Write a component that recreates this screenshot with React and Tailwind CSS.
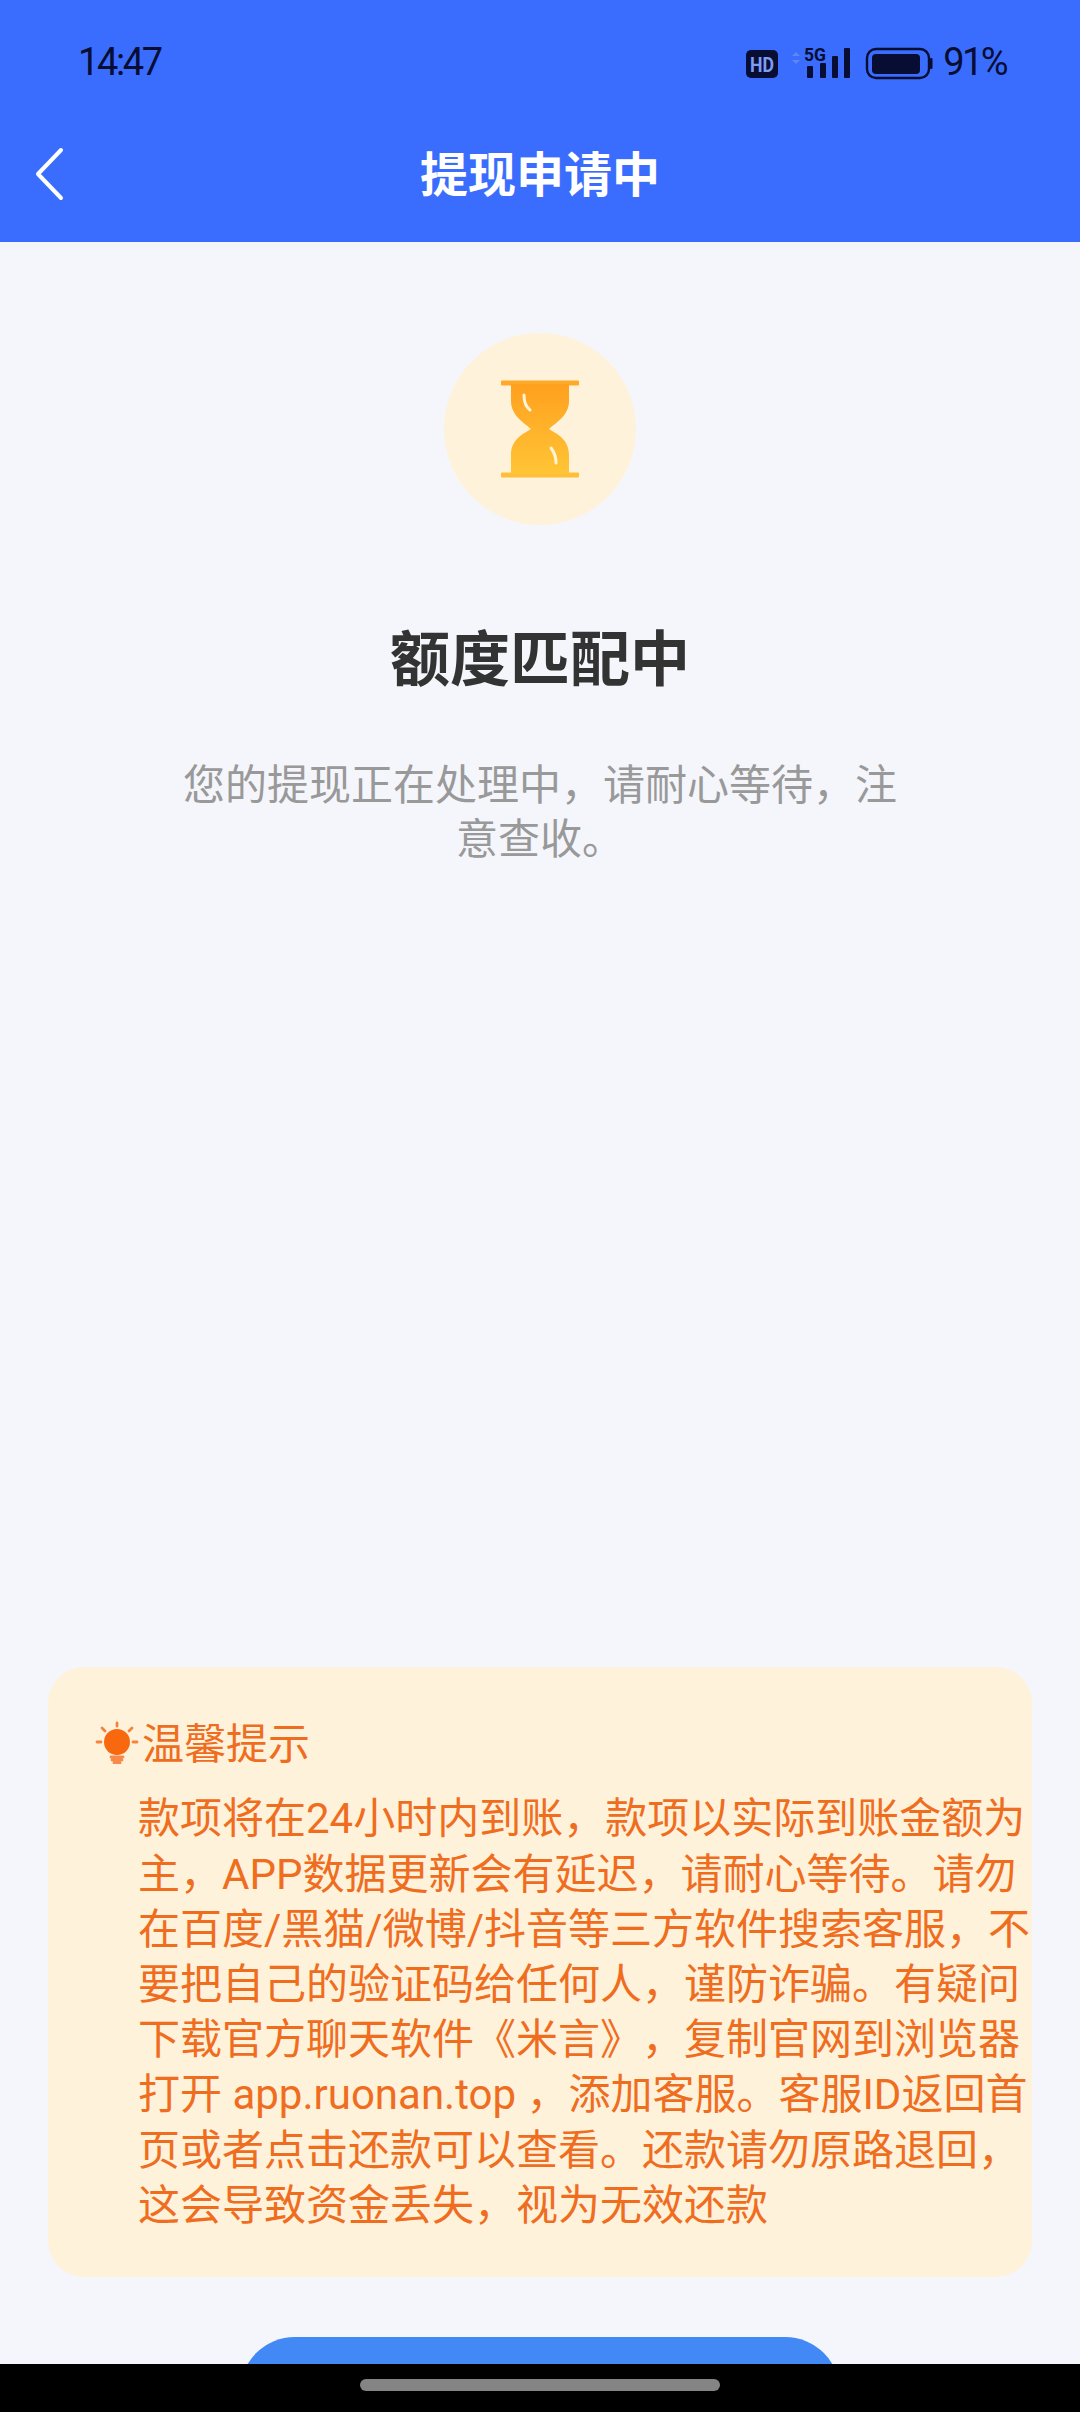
const cjk = { fontFamily: 'Roboto, "Noto Sans CJK SC", sans-serif' }

function StatusIcons() {
  return (
    <svg width="187" height="34" viewBox="0 0 187 34" className="block overflow-visible">
      <rect x="0" y="5" width="32" height="28" rx="5" fill="#070d33" />
      <text x="16" y="26.5" textAnchor="middle" fontSize="20" fontWeight="700" fill="#7d9cf5" fontFamily="Roboto, sans-serif" textLength="24" lengthAdjust="spacingAndGlyphs">HD</text>
      <path d="M50 7l-4 4h8zM50 19l-4-4h8z" fill="#5f86f5" />
      <text x="58" y="16" fontSize="19" fontWeight="700" fill="#070d33" fontFamily="Roboto, sans-serif" textLength="22" lengthAdjust="spacingAndGlyphs">5G</text>
      <rect x="61" y="21" width="6" height="12" fill="#070d33" rx="1" />
      <rect x="74" y="18" width="6" height="15" fill="#070d33" rx="1" />
      <rect x="86" y="11" width="6" height="22" fill="#070d33" rx="1" />
      <rect x="98" y="3" width="6" height="30" fill="#070d33" rx="1" />
      <rect x="121" y="4" width="62" height="29" rx="9" fill="none" stroke="#070d33" strokeWidth="2.4" />
      <rect x="126" y="9" width="48" height="20" rx="4" fill="#070d33" />
      <rect x="184" y="13" width="2.5" height="11" rx="1" fill="#070d33" />
    </svg>
  )
}

function Hourglass() {
  return (
    <svg width="80" height="100" viewBox="0 0 80 100">
      <defs>
        <linearGradient id="sand" x1="0" y1="0" x2="0" y2="1">
          <stop offset="0" stopColor="#ffa01f" />
          <stop offset="1" stopColor="#ffc535" />
        </linearGradient>
      </defs>
      <rect x="1" y="1.5" width="78" height="5" rx="1" fill="#ffa928" />
      <rect x="1" y="93.5" width="78" height="5" rx="1" fill="#ffbe3a" />
      <path d="M11 5H69V22C69 36 57 43 49 50C57 55 69 60 69 76V95H11V76C11 60 23 55 31 50C23 43 11 36 11 22Z" fill="url(#sand)" />
      <path d="M24 16C24 22 26 28 30 31" fill="none" stroke="#fff3d8" strokeWidth="3" strokeLinecap="round" />
      <path d="M51 69C54 73 56 78 56 84" fill="none" stroke="#fff3d8" strokeWidth="3" strokeLinecap="round" />
    </svg>
  )
}

function Bulb() {
  return (
    <svg width="44" height="44" viewBox="0 0 44 44" className="mb-[6px] shrink-0">
      <circle cx="22" cy="22" r="13" fill="#f7680f" />
      <g stroke="#f4833c" strokeWidth="2.8" strokeLinecap="round">
        <path d="M22 3v3M2 22h4M38 22h4M7 8l3 3M37 8l-3 3" />
        <path d="M16 37h12M17 40h10M19 43h6" stroke="#f7894a" />
      </g>
    </svg>
  )
}

export default function App() {
  return (
    <div className="relative flex h-[2412px] w-[1080px] flex-col overflow-hidden bg-[#f4f6fb]" style={cjk}>
      <header className="h-[242px] shrink-0 bg-[#3a6dfd]">
        <div className="flex h-[124px] items-center justify-between pl-[78px] pr-[74px] text-[#070d33]">
          <span className="text-[38px] tracking-[-2.4px]">14:47</span>
          <div className="flex items-center gap-[10px]">
            <StatusIcons />
            <span className="text-[38px] tracking-[-2.6px]">91%</span>
          </div>
        </div>
        <div className="relative flex h-[98px] items-center justify-center">
          <svg width="32" height="54" viewBox="0 0 32 54" className="absolute left-[33px] top-[23px]">
            <path d="M28 3L5 27L28 51" fill="none" stroke="#fff" strokeWidth="4" strokeLinecap="round" strokeLinejoin="round" />
          </svg>
          <h1 className="pt-[5px] text-[48px] font-bold leading-none text-white">提现申请中</h1>
        </div>
      </header>

      <main className="flex flex-1 flex-col items-center overflow-hidden">
        <div className="mt-[91px] flex h-[192px] w-[192px] items-center justify-center rounded-full bg-[#fff2da]">
          <Hourglass />
        </div>
        <h2 className="mt-[96px] text-[60px] font-bold leading-[80px] text-[#333333]">额度匹配中</h2>
        <p className="mt-[58px] w-[720px] text-center text-[42px] leading-[54px] text-[#999999]">
          您的提现正在处理中，请耐心等待，注意查收。
        </p>

        <div className="mt-auto w-[984px] shrink-0 rounded-[36px] bg-[#fff2da] pb-[44px] pt-[50px] text-[#ef6d1f]">
          <div className="flex items-center gap-[3px] pl-[47px] text-[42px] leading-[55px]">
            <Bulb />
            <span>温馨提示</span>
          </div>
          <p className="mt-[19px] pl-[90px] text-[42px] leading-[55.2px] [text-spacing-trim:space-all]">
            款项将在24小时内到账，款项以实际到账金额为主，APP数据更新会有延迟，请耐心等待。请勿在百度/黑猫/微博/抖音等三方软件搜索客服，不要把自己的验证码给任何人，谨防诈骗。有疑问下载官方聊天软件《米言》，复制官网到浏览器打开 app.ruonan.top ，添加客服。客服ID返回首页或者点击还款可以查看。还款请勿原路退回，这会导致资金丢失，视为无效还款
          </p>
        </div>

        <button className="mb-[-83px] mt-[60px] h-[110px] w-[600px] shrink-0 rounded-[55px] bg-[#4389f6]" />
      </main>

      <div className="flex h-[48px] shrink-0 justify-center bg-black pt-[15px]">
        <div className="h-[12px] w-[360px] rounded-full bg-[#848484]" />
      </div>
    </div>
  )
}
